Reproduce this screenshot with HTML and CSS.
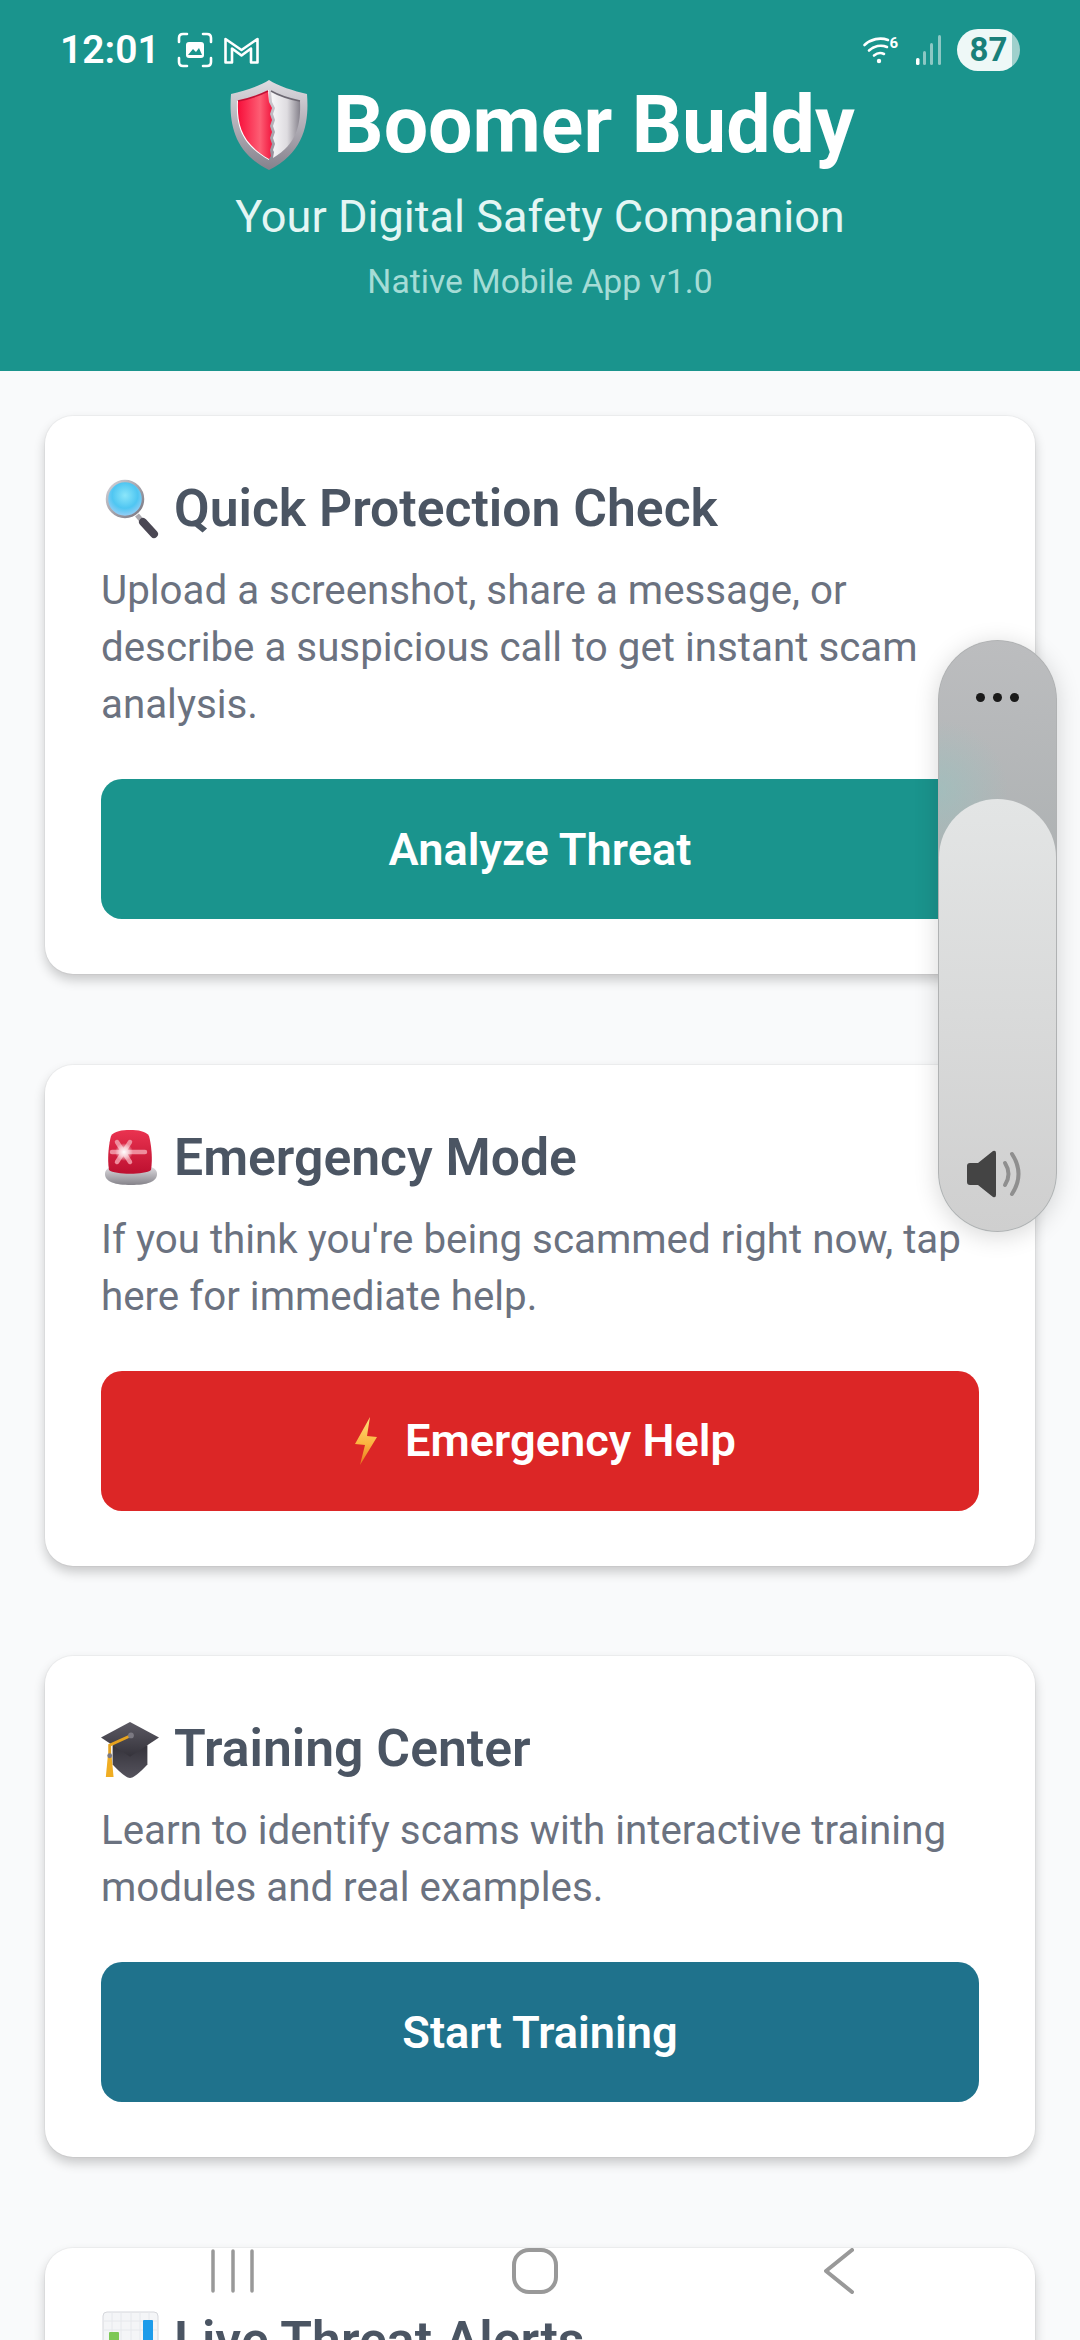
FILE: index.html
```html
<!DOCTYPE html>
<html lang="en">
<head>
<meta charset="utf-8">
<title>Boomer Buddy</title>
<link rel="stylesheet" href="styles.css">
</head>
<body>
<div class="screen">
  <header class="hero">
    <h1 class="hero-title">
      <svg class="shield" viewBox="0 0 78 90">
        <defs>
          <linearGradient id="shRim" x1="0" y1="0" x2="0" y2="1"><stop offset="0" stop-color="#dedce1"/><stop offset="1" stop-color="#85818c"/></linearGradient>
          <linearGradient id="shRed" x1="0" y1="0" x2="1" y2="0"><stop offset="0" stop-color="#f70f3a"/><stop offset=".25" stop-color="#fa2c50"/><stop offset=".65" stop-color="#fd5e74"/><stop offset="1" stop-color="#f2173f"/></linearGradient>
          <linearGradient id="shWhite" x1="0" y1="0" x2="1" y2="0"><stop offset="0" stop-color="#f8f7f9"/><stop offset=".55" stop-color="#dedce0"/><stop offset="1" stop-color="#85818b"/></linearGradient>
        </defs>
        <path d="M39 0C30 6 14 11 1 14C-1 40 2 72 39 90C76 72 79 40 77 14C64 11 48 6 39 0Z" fill="url(#shRim)"/>
        <path d="M39 10C30 15 18 19 7 21C6 44 10 64 39 80Z" fill="#fff"/>
        <path d="M38 11C30 15 18 19 8 21C7 44 11 63 39 79L41 76L40 70L42 64L40 58L42 52L40 46L42 40L40 34L42 28L39 22Z" fill="url(#shRed)"/>
        <path d="M41 11C48 15 60 19 70 21C71 44 67 64 43 78L44 72L43 70L45 64L43 58L45 52L43 46L45 40L43 34L45 28L42 22Z" fill="url(#shWhite)"/>
        <path d="M41 11C48 15 60 19 70 21" fill="none" stroke="#6c6872" stroke-width="1.500"/>
        <path d="M8 21C18 19 30 15 38 11" fill="none" stroke="#c11034" stroke-width="1.500"/>
      </svg>
      <span>Boomer Buddy</span>
    </h1>
    <p class="hero-sub">Your Digital Safety Companion</p>
    <p class="hero-version">Native Mobile App v1.0</p>
  </header>

  <main class="cards">
    <section class="card">
      <h2 class="card-title">
        <svg class="emoji" viewBox="0 0 58 60">
          <defs>
            <radialGradient id="lens" cx=".5" cy=".4" r=".65"><stop offset="0" stop-color="#8be6fa"/><stop offset=".55" stop-color="#4fc6f2"/><stop offset=".85" stop-color="#8fcdf5"/><stop offset="1" stop-color="#cfc6f4"/></radialGradient>
            <linearGradient id="lensRim" x1="0" y1="0" x2="1" y2="1"><stop offset="0" stop-color="#d5d4da"/><stop offset="1" stop-color="#77757f"/></linearGradient>
          </defs>
          <line x1="36" y1="36" x2="41" y2="42" stroke="#aaa8ae" stroke-width="5"/>
          <line x1="42" y1="43" x2="53" y2="55" stroke="#4a4753" stroke-width="8" stroke-linecap="round"/>
          <circle cx="24" cy="20" r="18" fill="url(#lens)" stroke="url(#lensRim)" stroke-width="2.500"/>
        </svg>
        <span>Quick Protection Check</span>
      </h2>
      <p class="card-text">Upload a screenshot, share a message, or describe a suspicious call to get instant scam analysis.</p>
      <button class="action action-teal">Analyze Threat</button>
    </section>

    <section class="card">
      <h2 class="card-title">
        <svg class="emoji" viewBox="0 0 58 60">
          <defs>
            <linearGradient id="dome" x1="0" y1="0" x2="0" y2="1"><stop offset="0" stop-color="#ea3350"/><stop offset="1" stop-color="#bd1030"/></linearGradient>
            <linearGradient id="base" x1="0" y1="0" x2="0" y2="1"><stop offset="0" stop-color="#dcdade"/><stop offset="1" stop-color="#85838a"/></linearGradient>
            <radialGradient id="flare"><stop offset="0" stop-color="#fff"/><stop offset=".5" stop-color="#fff" stop-opacity=".6"/><stop offset="1" stop-color="#fff" stop-opacity="0"/></radialGradient>
          </defs>
          <path d="M4 46C4 42 7 40 10 39H50C53 40 56 42 56 46C56 54 46 57 30 57C14 57 4 54 4 46Z" fill="url(#base)"/>
          <path d="M8 42C6 30 8 15 10 8C13 3 21 2 29 2C37 2 45 3 48 8C50 15 52 30 50 42C44 47 14 47 8 42Z" fill="url(#dome)"/>
          <path d="M16 14L29 34M29 14L16 34M11 24H44" stroke="#ee8c9c" stroke-width="4.500" stroke-linecap="round"/>
          <circle cx="23" cy="24" r="9" fill="url(#flare)"/>
        </svg>
        <span>Emergency Mode</span>
      </h2>
      <p class="card-text">If you think you're being scammed right now, tap here for immediate help.</p>
      <button class="action action-red">
        <svg class="bolt" viewBox="0 0 22 48">
          <defs><linearGradient id="boltFill" x1="0" y1="0" x2="0" y2="1"><stop offset="0" stop-color="#ffe07a"/><stop offset=".55" stop-color="#fbb540"/><stop offset="1" stop-color="#e8761e"/></linearGradient></defs>
          <path d="M15 0L0 27L10 28L5 48L22 20L12 19Z" fill="url(#boltFill)"/>
        </svg>
        <span>Emergency Help</span>
      </button>
    </section>

    <section class="card">
      <h2 class="card-title">
        <svg class="emoji" viewBox="0 0 60 60">
          <defs>
            <linearGradient id="capTop" x1="0" y1="0" x2="0" y2="1"><stop offset="0" stop-color="#5c5a64"/><stop offset="1" stop-color="#35333b"/></linearGradient>
            <linearGradient id="capBody" x1="0" y1="0" x2="0" y2="1"><stop offset="0" stop-color="#35333b"/><stop offset="1" stop-color="#55535d"/></linearGradient>
          </defs>
          <path d="M12 26V46C20 55 27 60 30 60C33 60 40 55 48 46V26Z" fill="url(#capBody)"/>
          <path d="M30 2L60 18L30 38L0 18Z" fill="url(#capTop)"/>
          <path d="M31 16L9 26V40" fill="none" stroke="#e5a21f" stroke-width="3"/>
          <circle cx="31" cy="16" r="3" fill="#7b7982"/>
          <path d="M7 38H11L13 59H5Z" fill="#f0ad22"/>
          <circle cx="9" cy="37" r="2.500" fill="#7b7982"/>
        </svg>
        <span>Training Center</span>
      </h2>
      <p class="card-text">Learn to identify scams with interactive training modules and real examples.</p>
      <button class="action action-blue">Start Training</button>
    </section>

    <section class="card">
      <h2 class="card-title">
        <svg class="emoji" viewBox="0 0 58 60">
          <rect x="2" y="1" width="55" height="58" rx="4" fill="#f4f5f7" stroke="#d5d7dc"/>
          <path d="M2 10H57M2 19H57M11 1V59M20 1V59M30 1V59M39 1V59M48 1V59" stroke="#e6e8ec" stroke-width="1"/>
          <rect x="8" y="21" width="10" height="36" rx="1" fill="#7dc855"/>
          <rect x="25" y="36" width="10" height="21" rx="1" fill="#e8394f"/>
          <rect x="42" y="9" width="10" height="48" rx="1" fill="#1c9bea"/>
        </svg>
        <span>Live Threat Alerts</span>
      </h2>
    </section>
  </main>

  <div class="statusbar">
    <div class="status-left">
      <span class="clock">12:01</span>
      <svg class="st-shot" viewBox="0 0 36 36" fill="none" stroke="#fff" stroke-width="2.600" stroke-linecap="round">
        <path d="M2 10V6Q2 2 6 2H10M26 2H30Q34 2 34 6V10M34 26V30Q34 34 30 34H26M10 34H6Q2 34 2 30V26"/>
        <rect x="9" y="10" width="18" height="16" rx="3" fill="#fff" stroke="none"/>
        <path d="M11 23L16 17L19 20L22 16L25 23Z" fill="#1a948d" stroke="none"/>
      </svg>
      <svg class="st-mail" viewBox="0 0 35 27" fill="none" stroke="#fff" stroke-width="2.600" stroke-linejoin="round">
        <path d="M1.500 2L17.500 13L33.500 2V25.500H27V11.500L17.500 18.500L8 11.500V25.500H1.500Z"/>
      </svg>
    </div>
    <div class="status-right">
      <svg class="st-wifi" viewBox="0 0 36 28" fill="none" stroke="#fff" stroke-width="2.600" stroke-linecap="round">
        <path d="M1.500 9C8 3 17 1 25 4"/>
        <path d="M6 14.500C11 10 18 8.500 24 11"/>
        <path d="M11 19.500C14 17 18 16.500 21 18"/>
        <circle cx="16" cy="25" r="2.200" fill="#fff" stroke="none"/>
        <text x="26.500" y="12" class="st-wifi-six">6</text>
      </svg>
      <svg class="st-signal" viewBox="0 0 26 30">
        <rect x="0" y="23" width="3.500" height="7" rx="1.500" fill="#fff"/>
        <rect x="7" y="16" width="3" height="14" rx="1.500" fill="#8cc8c4"/>
        <rect x="14" y="8" width="3" height="22" rx="1.500" fill="#8cc8c4"/>
        <rect x="22" y="0" width="3" height="30" rx="1.500" fill="#8cc8c4"/>
      </svg>
      <div class="battery"><span>87</span></div>
    </div>
  </div>

  <aside class="volume">
    <div class="volume-dots"><i></i><i></i><i></i></div>
    <div class="volume-fill">
      <svg class="volume-icon" viewBox="0 0 58 48" fill="none">
        <path d="M2 16Q2 13 5 13H13L28 1Q31 0 31 3V45Q31 48 28 47L13 35H5Q2 35 2 32Z" fill="#444"/>
        <path d="M40 13Q47 24 40 35" stroke="#8f8f8f" stroke-width="4" stroke-linecap="round"/>
        <path d="M47 4Q60 24 47 44" stroke="#8f8f8f" stroke-width="4" stroke-linecap="round"/>
      </svg>
    </div>
  </aside>

  <nav class="navbar">
    <svg class="nav-recent" viewBox="0 0 44 46" stroke="#999" stroke-width="3.500" stroke-linecap="round">
      <path d="M2 3V43M22 3V43M41 3V43"/>
    </svg>
    <svg class="nav-home" viewBox="0 0 46 46" fill="none" stroke="#999" stroke-width="4">
      <rect x="2" y="2" width="42" height="42" rx="15"/>
    </svg>
    <svg class="nav-back" viewBox="0 0 30 46" fill="none" stroke="#999" stroke-width="4" stroke-linecap="round" stroke-linejoin="round">
      <path d="M28 2L2 23L28 44"/>
    </svg>
  </nav>
</div>
</body>
</html>
```

FILE: styles.css
```css
* { box-sizing: border-box; }

html, body {
  margin: 0;
  padding: 0;
}

body {
  width: 1080px;
  height: 2340px;
  overflow: hidden;
  font-family: Roboto, "Liberation Sans", sans-serif;
  background: #f9fafb;
}

.screen {
  position: relative;
  width: 1080px;
  height: 2340px;
  overflow: hidden;
}

.hero {
  height: 371px;
  padding-top: 80px;
  background: #1a948d;
  text-align: center;
}

.hero-title {
  display: flex;
  align-items: center;
  justify-content: center;
  gap: 25px;
  margin: 0;
  padding-left: 5px;
  height: 90px;
  font-size: 78.800px;
  font-weight: 700;
  line-height: 90px;
  color: #fff;
}

.shield {
  width: 78px;
  height: 90px;
  flex: none;
}

.hero-sub {
  margin: 17px 0 0;
  font-size: 45.100px;
  line-height: 60px;
  color: #e4f6f4;
}

.hero-version {
  margin: 12px 0 0;
  font-size: 33.700px;
  line-height: 46px;
  color: #a5dcd6;
}

.cards {
  display: flex;
  flex-direction: column;
  gap: 90.500px;
  padding: 45px 45px 0;
}

.card {
  padding: 57px 56px 55px;
  background: #fff;
  border-radius: 28px;
  box-shadow: 0 0 0 1px rgba(0, 0, 0, .03), 0 6px 12px rgba(0, 0, 0, .2);
}

.card-title {
  display: flex;
  align-items: center;
  gap: 15px;
  margin: 0 0 17px;
  height: 72px;
  font-size: 51.700px;
  font-weight: 600;
  line-height: 72px;
  color: #4b5563;
}

.emoji {
  width: 58px;
  height: 60px;
  flex: none;
}

.card-text {
  margin: 0 0 46px;
  font-size: 40.300px;
  line-height: 57px;
  color: #6b7280;
}

.action {
  display: flex;
  align-items: center;
  justify-content: center;
  width: 100%;
  height: 140px;
  border: 0;
  border-radius: 21px;
  font-family: inherit;
  font-size: 45.200px;
  font-weight: 600;
  color: #fff;
}

.action-teal { background: #1a948d; }
.action-red { background: #dc2626; }
.action-blue { background: #1f728c; }

.bolt {
  width: 22px;
  height: 48px;
  flex: none;
  margin: 0 28px 0 11px;
}

.statusbar {
  position: absolute;
  top: 29px;
  left: 60px;
  right: 60px;
  height: 42px;
  display: flex;
  align-items: center;
  justify-content: space-between;
}

.status-left,
.status-right {
  display: flex;
  align-items: center;
}

.clock {
  font-size: 39px;
  font-weight: 600;
  color: #fff;
  margin-right: 17px;
}

.st-shot {
  width: 36px;
  height: 36px;
  margin-right: 11px;
}

.st-mail {
  width: 35px;
  height: 27px;
}

.st-wifi {
  width: 36px;
  height: 28px;
  margin-right: 17px;
  overflow: visible;
}

.st-wifi-six {
  font-family: Roboto, sans-serif;
  font-size: 15px;
  font-weight: 700;
  fill: #fff;
  stroke: none;
}

.st-signal {
  width: 26px;
  height: 30px;
  margin-right: 15px;
}

.battery {
  width: 63px;
  height: 42px;
  border-radius: 21px;
  background: linear-gradient(to right, #eef8f7 87%, #9fd0cc 87%);
  text-align: center;
  font-size: 33px;
  font-weight: 700;
  line-height: 42px;
  color: #19807a;
}

.volume {
  position: absolute;
  left: 938px;
  top: 640px;
  width: 119px;
  height: 592px;
  border-radius: 60px;
  background:
    radial-gradient(circle at 0 150px, rgba(150, 195, 192, .55), rgba(150, 195, 192, 0) 70px),
    linear-gradient(#bcbdbf, #adb1b2 40%, #a8b1b2);
  box-shadow: inset 0 0 0 1px #b0b2b3, 0 4px 24px rgba(0, 0, 0, .16);
  overflow: hidden;
}

.volume-dots {
  display: flex;
  justify-content: center;
  gap: 8px;
  padding-top: 53px;
}

.volume-dots i {
  width: 9px;
  height: 9px;
  border-radius: 50%;
  background: #1a1a1a;
}

.volume-fill {
  position: absolute;
  left: 1px;
  right: 1px;
  top: 159px;
  bottom: 1px;
  border-radius: 60px;
  background: linear-gradient(#e3e5e5, #cfcfcf);
}

.volume-icon {
  position: absolute;
  left: 26px;
  top: 351px;
  width: 58px;
  height: 48px;
}

.navbar {
  position: absolute;
  left: 0;
  top: 2248px;
  width: 1080px;
  height: 46px;
}

.nav-recent,
.nav-home,
.nav-back {
  position: absolute;
  top: 0;
  height: 46px;
}

.nav-recent { left: 211px; width: 44px; }
.nav-home { left: 512px; width: 46px; }
.nav-back { left: 824px; width: 30px; }
```
